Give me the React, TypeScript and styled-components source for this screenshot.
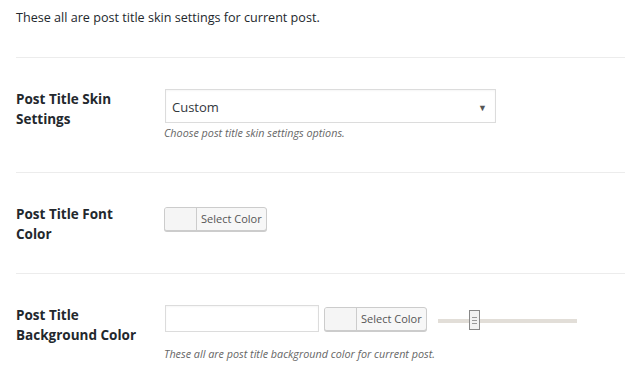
import React from "react";
import styled, { createGlobalStyle } from "styled-components";

const GlobalStyle = createGlobalStyle`
  html, body {
    margin: 0;
    padding: 0;
    background: #fff;
  }
  body {
    font-family: "Segoe UI", "Open Sans", "Noto Sans", sans-serif;
    color: #23282d;
  }
`;

const Page = styled.div`
  width: 625px;
  height: 391px;
  overflow: hidden;
  padding-left: 16px;
  box-sizing: border-box;
  background: #fff;
`;

const Intro = styled.p`
  margin: 0;
  padding: 9px 0 0;
  height: 48px;
  font-size: 12.6px;
  line-height: 18px;
  border-bottom: 1px solid #ececec;
`;

const Row = styled.div<{ $last?: boolean }>`
  display: flex;
  padding: 31px 0 29px;
  border-bottom: ${({ $last }) => ($last ? "none" : "1px solid #ececec")};
`;

const Label = styled.div`
  width: 148px;
  flex: none;
  font-size: 13.5px;
  font-weight: 700;
  line-height: 20px;
  padding-right: 10px;
  box-sizing: border-box;
`;

const Field = styled.div`
  display: flex;
  flex-direction: column;
  align-items: flex-start;
`;

const Inline = styled.div<{ $top?: number }>`
  display: flex;
  align-items: center;
  gap: 5px;
  margin-top: ${({ $top }) => $top ?? 0}px;
`;

const Select = styled.div`
  width: 331px;
  height: 34px;
  box-sizing: border-box;
  border: 1px solid #dcdcdc;
  margin-left: 1px;
  display: flex;
  align-items: center;
  justify-content: space-between;
  padding: 2px 8px 0 6px;
  font-size: 13px;
  color: #32373c;
  box-shadow: inset 0 1px 2px rgba(0, 0, 0, 0.04);
`;

const Arrow = styled.span`
  font-size: 9px;
  color: #555;
`;

const Hint = styled.p<{ $gap?: number }>`
  margin: ${({ $gap }) => $gap ?? 0}px 0 0;
  font-size: 10.8px;
  line-height: 20px;
  font-style: italic;
  color: #666;
`;

const ColorButton = styled.div`
  display: flex;
  height: 24px;
  box-sizing: border-box;
  border: 1px solid #ccc;
  border-radius: 3px;
  background: #f7f7f7;
  box-shadow: 0 1px 0 #ccc;
  overflow: hidden;
`;

const Swatch = styled.span`
  width: 31px;
  border-right: 1px solid #ccc;
  background: #f5f5f5;
`;

const ButtonText = styled.span`
  padding: 0 4px 0 4px;
  font-size: 11px;
  line-height: 22px;
  color: #555;
`;

const TextInput = styled.div`
  width: 154px;
  height: 27px;
  box-sizing: border-box;
  margin-left: 1px;
  border: 1px solid #dcdcdc;
  box-shadow: inset 0 1px 2px rgba(0, 0, 0, 0.04);
`;

const Slider = styled.div`
  position: relative;
  width: 139px;
  height: 4px;
  margin-left: 6px;
  margin-top: 5px;
  background: #e2ded8;
`;

const Handle = styled.div`
  position: absolute;
  left: 31px;
  top: -9px;
  width: 11px;
  height: 20px;
  box-sizing: border-box;
  border: 1px solid #888;
  background: #f2f2f2;
  display: flex;
  flex-direction: column;
  align-items: center;
  justify-content: center;
  gap: 2px;

  & span {
    width: 5px;
    height: 1px;
    background: #999;
  }
`;

const PickColor = () => (
  <ColorButton>
    <Swatch />
    <ButtonText>Select Color</ButtonText>
  </ColorButton>
);

export default function App() {
  return (
    <Page>
      <GlobalStyle />
      <Intro>These all are post title skin settings for current post.</Intro>

      <Row>
        <Label>
          Post Title Skin
          <br />
          Settings
        </Label>
        <Field>
          <Select>
            Custom
            <Arrow>▼</Arrow>
          </Select>
          <Hint>Choose post title skin settings options.</Hint>
        </Field>
      </Row>

      <Row>
        <Label>
          Post Title Font
          <br />
          Color
        </Label>
        <Field>
          <Inline $top={3}>
            <PickColor />
          </Inline>
        </Field>
      </Row>

      <Row $last>
        <Label>
          Post Title
          <br />
          Background Color
        </Label>
        <Field>
          <Inline>
            <TextInput />
            <PickColor />
            <Slider>
              <Handle>
                <span />
                <span />
                <span />
              </Handle>
            </Slider>
          </Inline>
          <Hint $gap={12}>These all are post title background color for current post.</Hint>
        </Field>
      </Row>
    </Page>
  );
}
